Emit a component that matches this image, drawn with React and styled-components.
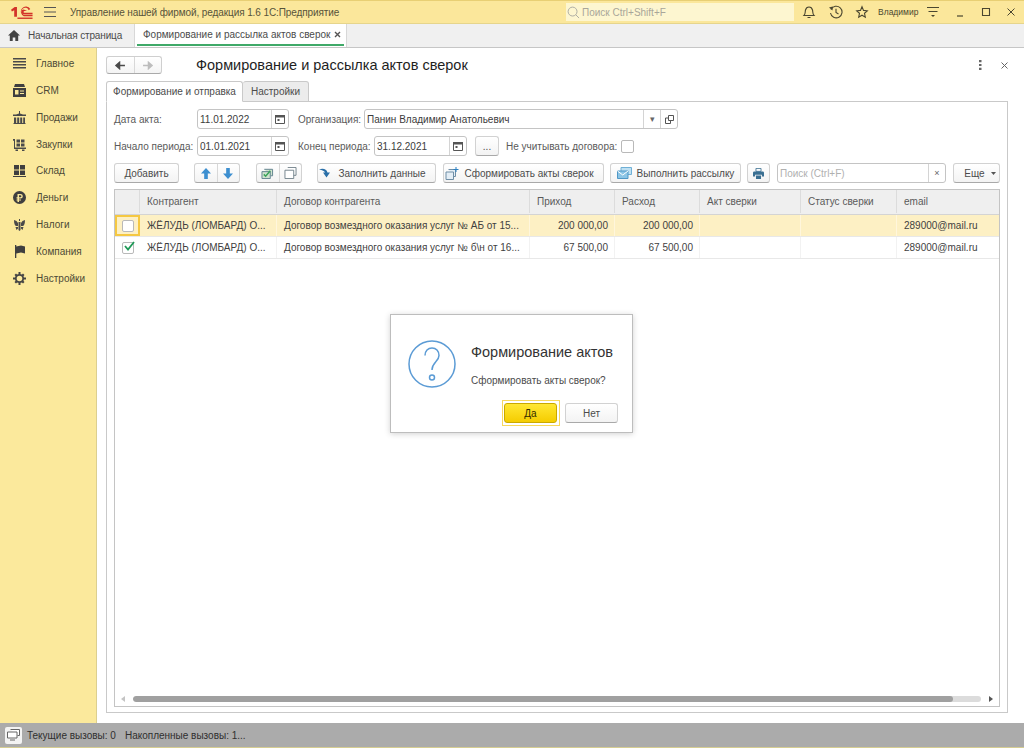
import React from "react";
import styled, { createGlobalStyle } from "styled-components";

const GlobalStyle = createGlobalStyle`
  html, body {
    margin: 0;
    padding: 0;
    background: #fff;
  }
  body {
    font-family: "Liberation Sans", Arial, sans-serif;
    font-size: 10px;
    color: #4b4b4b;
  }
`;

const columns = "25px 137px 253px 85px 85px 101px 96px 1fr";

const Window = styled.div`
  position: relative;
  width: 1024px;
  height: 748px;
  display: flex;
  flex-direction: column;
  overflow: hidden;
`;

const TitleBar = styled.div`
  flex: none;
  display: flex;
  align-items: center;
  background: #fbe79b;
  border-bottom: 1px solid #e6d58c;
  border-top: 1px solid #e8cf74;
  height: 22px;
  color: #57533a;
`;

const Logo = styled.svg`
  width: 22px;
  height: 13px;
  margin-left: 11px;
`;

const Burger = styled.svg`
  width: 12px;
  height: 10px;
  margin-left: 11px;
`;

const AppName = styled.div`
  margin-left: 14px;
  width: 496px;
  letter-spacing: -0.1px;
  white-space: nowrap;
`;

const GlobalSearch = styled.div`
  width: 228px;
  height: 18px;
  display: flex;
  align-items: center;
  gap: 2px;
  padding-left: 1px;
  box-sizing: border-box;
  background: #fdf6d0;
  color: #a9a69a;
`;

const BarIcon = styled.svg`
  width: ${p => p.$size || 14}px;
  height: ${p => p.$size || 14}px;
  margin-left: ${p => p.$ml}px;
  flex: none;
`;

const UserName = styled.div`
  margin-left: 9px;
  width: 42px;
  font-size: 8.5px;
  white-space: nowrap;
  color: #4a4630;
`;

const TabBar = styled.div`
  height: 23px;
  flex: none;
  display: flex;
  align-items: stretch;
  background: #f0f0f0;
  border-bottom: 1px solid #c6c6c6;
`;

const HomeTab = styled.div`
  width: 135px;
  display: flex;
  align-items: center;
  gap: 8px;
  padding-left: 8px;
  box-sizing: border-box;
  border-right: 1px solid #d8d8d8;
  letter-spacing: -0.15px;
  white-space: nowrap;
`;

const ActiveTab = styled.div`
  position: relative;
  width: 212px;
  display: flex;
  align-items: center;
  justify-content: space-between;
  padding: 0 5px 2px 8px;
  box-sizing: border-box;
  background: #fff;
  border-right: 1px solid #d8d8d8;
  white-space: nowrap;
  &::after {
    content: "";
    position: absolute;
    left: 2px;
    right: 2px;
    bottom: 1px;
    height: 2px;
    background: #3fa968;
  }
`;

const Body = styled.div`
  flex: 1;
  min-height: 0;
  display: flex;
`;

const Sidebar = styled.nav`
  width: 97px;
  flex: none;
  padding-top: 2px;
  box-sizing: border-box;
  background: #fbe99c;
  border-right: 1px solid #dccf8f;
`;

const NavItem = styled.div`
  height: 26.88px;
  display: flex;
  align-items: center;
  padding-left: 13px;
  gap: 10px;
  color: #4d4a36;
`;

const NavIcon = styled.svg`
  width: 13px;
  height: 13px;
  flex: none;
`;

const Main = styled.main`
  flex: 1;
  min-width: 0;
  display: flex;
  flex-direction: column;
  padding: 8px 16px 10px 9px;
  background: #fff;
`;

const Header = styled.div`
  height: 18px;
  flex: none;
  display: flex;
  align-items: center;
`;

const NavGroup = styled.div`
  width: 56px;
  height: 18px;
  display: flex;
  box-sizing: border-box;
  background: linear-gradient(#fff, #f4f4f4);
  border: 1px solid #cfcfcf;
  border-bottom-color: #aaa;
  border-radius: 3px;
`;

const NavArrow = styled.div`
  flex: 1;
  display: flex;
  align-items: center;
  justify-content: center;
  border-left: ${p => (p.$divider ? "1px solid #d8d8d8" : "none")};
`;

const PageTitle = styled.h1`
  margin: 0 0 0 34px;
  flex: 1;
  font-size: 14.5px;
  font-weight: 400;
  color: #1f1f1f;
  white-space: nowrap;
`;

const TabRow = styled.div`
  height: 21px;
  margin-top: 7px;
  flex: none;
  display: flex;
  position: relative;
  z-index: 1;
  margin-bottom: -1px;
`;

const FormTab = styled.div`
  width: ${p => p.$w}px;
  display: flex;
  align-items: center;
  justify-content: center;
  box-sizing: border-box;
  border: 1px solid #c9c9c9;
  border-bottom-color: ${p => (p.$active ? "#fff" : "#c9c9c9")};
  border-left-width: ${p => (p.$active ? 1 : 0)}px;
  border-radius: 3px 3px 0 0;
  background: ${p => (p.$active ? "#fff" : "#ececec")};
  white-space: nowrap;
`;

const Panel = styled.section`
  flex: 1;
  min-height: 0;
  display: flex;
  flex-direction: column;
  padding: 7px 7px 5px 7px;
  border: 1px solid #c9c9c9;
`;

const FormRow = styled.div`
  height: 20px;
  margin-bottom: 7px;
  flex: none;
  display: flex;
  align-items: center;
`;

const Label = styled.label`
  width: ${p => p.$w}px;
  margin-left: ${p => p.$ml || 0}px;
  flex: none;
  white-space: nowrap;
  color: #5a5a5a;
`;

const Field = styled.div`
  width: ${p => p.$w}px;
  height: 20px;
  margin-left: ${p => p.$ml || 0}px;
  display: flex;
  align-items: stretch;
  flex: none;
  box-sizing: border-box;
  background: #fff;
  border: 1px solid #c4c4c4;
  border-radius: 3px;
  color: #3c3c3c;
`;

const FieldText = styled.div`
  flex: 1;
  min-width: 0;
  display: flex;
  align-items: center;
  padding-left: 2px;
  white-space: nowrap;
  color: ${p => (p.$muted ? "#b0b0b0" : "inherit")};
`;

const FieldBtn = styled.div`
  width: ${p => p.$w || 16}px;
  flex: none;
  display: flex;
  align-items: center;
  justify-content: center;
  border-left: 1px solid #d4d4d4;
  color: #666;
  font-size: 9px;
`;

const CheckBox = styled.div`
  width: ${p => p.$size || 13}px;
  height: ${p => p.$size || 13}px;
  flex: none;
  box-sizing: border-box;
  background: #fff;
  border: 1px solid #b9b9b9;
  border-radius: 2px;
  position: relative;
`;

const CheckMark = styled.svg`
  position: absolute;
  left: 0;
  top: -3px;
  width: 13px;
  height: 12px;
`;

const Toolbar = styled.div`
  height: 20px;
  flex: none;
  display: flex;
  align-items: stretch;
`;

const Button = styled.div`
  width: ${p => p.$w}px;
  margin-left: ${p => p.$ml || 0}px;
  padding-left: ${p => p.$pl || 0}px;
  padding-right: ${p => p.$pr || 0}px;
  align-self: stretch;
  flex: none;
  display: flex;
  align-items: center;
  justify-content: center;
  gap: ${p => p.$gap || 0}px;
  box-sizing: border-box;
  background: linear-gradient(#fff, #f3f3f3);
  border: 1px solid #d2d2d2;
  border-bottom-color: #a9a9a9;
  border-radius: 3px;
  white-space: nowrap;
  color: #4b4b4b;
`;

const ButtonGroup = styled(Button)`
  justify-content: stretch;
`;

const GroupPart = styled.div`
  flex: 1;
  height: 100%;
  display: flex;
  align-items: center;
  justify-content: center;
  border-left: ${p => (p.$divider ? "1px solid #d8d8d8" : "none")};
`;

const Table = styled.div`
  flex: 1;
  min-height: 0;
  margin-top: 6px;
  display: flex;
  flex-direction: column;
  border: 1px solid #c4c4c4;
`;

const HeaderRow = styled.div`
  height: 23px;
  padding-bottom: 1px;
  flex: none;
  display: grid;
  grid-template-columns: ${columns};
  background: #efefef;
  border-bottom: 1px solid #d4d4d4;
`;

const HeaderCell = styled.div`
  display: flex;
  align-items: center;
  padding-left: 7px;
  border-right: 1px solid #dcdcdc;
  color: #5a5a5a;
  &:last-child {
    border-right: none;
  }
`;

const Row = styled.div`
  height: 21px;
  flex: none;
  display: grid;
  grid-template-columns: ${columns};
  background: ${p => (p.$selected ? "#fdf0c4" : "#fff")};
  border-bottom: 1px solid #e8e8e8;
`;

const Cell = styled.div`
  display: flex;
  align-items: center;
  justify-content: ${p => (p.$right ? "flex-end" : "flex-start")};
  padding: ${p => (p.$right ? "0 6px 0 0" : "0 0 0 7px")};
  min-width: 0;
  white-space: nowrap;
  border-right: 1px solid ${p => (p.$selected ? "#fff6dc" : "#f2f2f2")};
  color: #3f3f3f;
  &:last-child {
    border-right: none;
  }
`;

const CheckCell = styled.div`
  display: flex;
  align-items: center;
  justify-content: center;
  box-sizing: border-box;
  border: ${p => (p.$focus ? "2px solid #f5c842" : "none")};
`;

const TableFill = styled.div`
  flex: 1;
`;

const ScrollBar = styled.div`
  height: 15px;
  flex: none;
  display: flex;
  align-items: center;
  padding: 0 6px;
  gap: 8px;
`;

const ScrollTrack = styled.div`
  flex: 1;
  height: 6px;
  border-radius: 3px;
  background: #dcdcdc;
  overflow: hidden;
`;

const ScrollThumb = styled.div`
  width: 820px;
  height: 100%;
  border-radius: 3px;
  background: #a0a0a0;
`;

const ScrollArrow = styled.div`
  width: 0;
  height: 0;
  border-top: 3px solid transparent;
  border-bottom: 3px solid transparent;
  border-${p => (p.$left ? "right" : "left")}: 4px solid ${p => (p.$left ? "#c4c4c4" : "#555")};
`;

const StatusBar = styled.footer`
  height: 24px;
  flex: none;
  display: flex;
  align-items: center;
  padding-left: 5px;
  background: #ababab;
  border-bottom: 1px solid #d6cd92;
  color: #2f2f2f;
  white-space: nowrap;
`;

const StatusBtn = styled.div`
  width: 17px;
  height: 17px;
  margin-right: 5px;
  display: flex;
  align-items: center;
  justify-content: center;
  background: #f3f3f3;
  border-radius: 2px;
`;

const StatusText = styled.span`
  margin-right: 9px;
`;

const Dialog = styled.div`
  position: absolute;
  left: 390px;
  top: 314px;
  width: 243px;
  height: 119px;
  box-sizing: border-box;
  display: flex;
  padding: 25px 14px 0 17px;
  background: #fff;
  border: 1px solid #bdbdbd;
  box-shadow: 0 1px 6px rgba(0, 0, 0, 0.18);
`;

const DialogIcon = styled.svg`
  width: 48px;
  height: 48px;
  flex: none;
`;

const DialogBody = styled.div`
  margin-left: 15px;
  flex: 1;
  display: flex;
  flex-direction: column;
`;

const DialogTitle = styled.div`
  margin-top: 4px;
  font-size: 14.5px;
  line-height: 17px;
  color: #333;
`;

const DialogText = styled.div`
  margin-top: 13px;
  line-height: 13px;
  white-space: nowrap;
  color: #4b4b4b;
`;

const DialogActions = styled.div`
  margin-top: 16px;
  display: flex;
  justify-content: flex-end;
  gap: 8px;
`;

const DefaultButton = styled(Button)`
  position: relative;
  height: 20px;
  background: linear-gradient(#ffe733, #f5cc00);
  border-color: #c9a800;
  color: #332c00;
  &::before {
    content: "";
    position: absolute;
    inset: -4px -4px -4px -3px;
    border: 1px solid #f7d85e;
  }
`;

const PlainButton = styled(Button)`
  height: 20px;
`;

const stroke = { fill: "none", stroke: "currentColor", strokeWidth: 1.1 };

const Arrow = ({ color, flip }) => (
  <svg width="12" height="9" viewBox="0 0 13 10">
    <path
      d={flip ? "M1 5h7M7 1.500 11 5 7 8.500z" : "M12 5H5M6 1.500 2 5l4 3.500z"}
      fill={color}
      stroke={color}
      strokeWidth="1.600"
    />
  </svg>
);

const UpDown = ({ down }) => (
  <svg width="10" height="11" viewBox="0 0 11 12">
    <path
      d={down ? "M3.500 0h4v6H11L5.500 12 0 6h3.500z" : "M3.500 12h4V6H11L5.500 0 0 6h3.500z"}
      fill="#3d8fd0"
    />
  </svg>
);

const Calendar = () => (
  <svg width="10" height="10" viewBox="0 0 10 10">
    <path d="M.5 1.500h9v8h-9z" fill="none" stroke="#555" />
    <path d="M0 1h10v2.500H0zM2.500 5h2v2h-2z" fill="#555" />
  </svg>
);

const navIcons = {
  main: <path d="M0 1h13v1.400H0zM0 4h13v1.400H0zM0 7h13v1.400H0zM0 10h13v1.400H0z" fill="#4a4a4a" />,
  crm: (
    <path
      fillRule="evenodd"
      d="M2 0h9l1 3H1zM0 4h13v9H0zM2 6v4.500h3.500V6zM7 6.500v1h4v-1zM7 9v1h4V9z"
      fill="#3f3f3f"
    />
  ),
  sales: (
    <path
      d="M6 0h1v2.500l3 1H13v1.500H0V3.500h3l3-1zM1 6.500h2.200V12H1zM4.200 6.500h2V12h-2zM7.200 6.500h2V12h-2zM10.200 6.500H12V12h-1.800zM.5 12h12v1H.5z"
      fill="#4a4a4a"
    />
  ),
  buy: (
    <path
      d="M0 1h2v8.500h11V11H1V2.800H0zM3.500 1.500H7v3H3.500zM8 1.500h3.500v3H8zM3.500 5.500H7v3H3.500zM8 5.500h3.500v3H8zM2.500 11.500H5V13H2.500zM9 11.500h2.500V13H9z"
      fill="#4a4a4a"
    />
  ),
  stock: (
    <path d="M1 1h5v4.500H1zM7 1h5v4.500H7zM1 6.500h5V11H1zM7 6.500h5V11H7zM0 12h13v1H0z" fill="#3f3f3f" />
  ),
  money: (
    <path
      fillRule="evenodd"
      d="M6.500 0a6.500 6.500 0 1 0 0 13 6.500 6.500 0 0 0 0-13zM4.500 3h3a2.300 2.300 0 0 1 0 4.600H6v.9h2v1.100H6V11H4.500V9.600h-1V8.500h1v-.9h-1V6.300h1zM6 4.300v2h1.400a1 1 0 0 0 0-2z"
      fill="#3f3f3f"
    />
  ),
  tax: (
    <path
      d="M6 1h1v2H6zM1 2l2.500 1L5 5v3H3.500C2 8 1 6 1 2zM12 2l-2.500 1L8 5v3h1.500C11 8 12 6 12 2zM5.500 4h2v8l-1 1-1-1zM2.500 9H5v1.500L3.500 12zM10.500 9H8v1.500L9.500 12z"
      fill="#4a4a4a"
    />
  ),
  company: <path d="M2 0h1.300v13H2zM3.300 1.500 8 .5l4 1v7l-4-1-4.700 1z" fill="#3f3f3f" />,
  settings: (
    <g>
      <circle cx="6.500" cy="6.500" r="3.700" fill="none" stroke="#444" strokeWidth="1.800" />
      <path
        d="M5.500 0h2v2.500h-2zM5.500 10.500h2V13h-2zM0 5.500h2.500v2H0zM10.500 5.500H13v2h-2.500zM1.500 3 3 1.500 4.500 3 3 4.500zM8.500 3 10 1.500 11.500 3 10 4.500zM1.500 10 3 8.500 4.500 10 3 11.500zM8.500 10 10 8.500 11.500 10 10 11.500z"
        fill="#444"
      />
    </g>
  ),
};

const navItems = [
  ["main", "Главное"],
  ["crm", "CRM"],
  ["sales", "Продажи"],
  ["buy", "Закупки"],
  ["stock", "Склад"],
  ["money", "Деньги"],
  ["tax", "Налоги"],
  ["company", "Компания"],
  ["settings", "Настройки"],
];

const headers = ["", "Контрагент", "Договор контрагента", "Приход", "Расход", "Акт сверки", "Статус сверки", "email"];

const rows = [
  { checked: false, selected: true, contract: "Договор возмездного оказания услуг № АБ от 15...", sum: "200 000,00" },
  { checked: true, selected: false, contract: "Договор возмездного оказания услуг № б\\н от 16...", sum: "67 500,00" },
];

const App = () => {
  return (
    <Window>
      <GlobalStyle />
      <TitleBar>
        <Logo viewBox="0 0 24 14">
          <path d="M0 4 4 1h2.500v10.500H3.500V4.500L1 6z" fill="#d2332a" />
          <path d="M21 3.200A5.500 5.500 0 1 0 14 11h9.500V9.500H14a4 4 0 1 1 5.300-5z" fill="#d2332a" />
          <path d="M14 3.800a2.600 2.600 0 1 0 0 5.200h9.500V7.400H14.500a1 1 0 1 1 .5-2h2.500z" fill="#d2332a" />
          <path d="M7 12.500h16.500V14H7z" fill="#d2332a" />
        </Logo>
        <Burger viewBox="0 0 12 10">
          <path d="M0 .5h12M0 5h12M0 9.500h12" stroke="#555" strokeWidth="1" />
        </Burger>
        <AppName>Управление нашей фирмой, редакция 1.6 1С:Предприятие</AppName>
        <GlobalSearch>
          <svg width="13" height="13" viewBox="0 0 14 14">
            <circle cx="6" cy="6" r="4.800" fill="none" stroke="#a8a8a0" />
            <path d="m9.500 9.500 3.500 3.500" stroke="#a8a8a0" />
          </svg>
          Поиск Ctrl+Shift+F
        </GlobalSearch>
        <BarIcon $ml={8} viewBox="0 0 14 14">
          <path d="M2 10.500c1.500-1.500 1-3.500 1.500-5.500S5.500 2 7 2s3 1 3.500 3 0 4 1.500 5.500zM5.500 12.500h3" {...stroke} color="#4a4630" />
        </BarIcon>
        <BarIcon $ml={13} viewBox="0 0 14 14">
          <path d="M2 4.500A5.800 5.800 0 1 1 1.500 8M7 3.800V7.500l2.500 1.500" {...stroke} color="#4a4630" />
          <path d="M0 2.500 3.800 1.500 3.500 5.500z" fill="#4a4630" />
        </BarIcon>
        <BarIcon $ml={12} viewBox="0 0 14 14">
          <path d="M7 1.800 8.500 5.400 12.300 5.800 9.500 8.300 10.300 12.200 7 10.200 3.700 12.200 4.500 8.300 1.700 5.800 5.500 5.400z" {...stroke} color="#4a4630" />
        </BarIcon>
        <UserName>Владимир</UserName>
        <BarIcon $ml={6} $size={14} viewBox="0 0 14 14">
          <path d="M1 2.500h12M2.500 6.500h9" stroke="#4a4630" />
          <path d="M5 10h4l-2 2z" fill="#4a4630" />
        </BarIcon>
        <BarIcon $ml={14} $size={12} viewBox="0 0 12 12">
          <path d="M3 10h6" stroke="#4a4630" strokeWidth="1.200" />
        </BarIcon>
        <BarIcon $ml={14} $size={12} viewBox="0 0 12 12">
          <path d="M2.500 2.500h7v7h-7z" {...stroke} color="#4a4630" />
        </BarIcon>
        <BarIcon $ml={13} $size={12} viewBox="0 0 12 12">
          <path d="m2.500 2.500 7 7M9.500 2.500l-7 7" stroke="#4a4630" />
        </BarIcon>
      </TitleBar>

      <TabBar>
        <HomeTab>
          <svg width="12" height="11" viewBox="0 0 12 11">
            <path d="M6 0 12 5.500h-1.800V11H7.300V7.500H4.700V11H1.800V5.500H0z" fill="#444" />
          </svg>
          Начальная страница
        </HomeTab>
        <ActiveTab>
          Формирование и рассылка актов сверок
          <svg width="7" height="7" viewBox="0 0 7 7">
            <path d="m1 1 5 5M6 1 1 6" stroke="#555" strokeWidth="1.400" />
          </svg>
        </ActiveTab>
      </TabBar>

      <Body>
        <Sidebar>
          {navItems.map(([key, label]) => (
            <NavItem key={key}>
              <NavIcon viewBox="0 0 13 13">{navIcons[key]}</NavIcon>
              {label}
            </NavItem>
          ))}
        </Sidebar>

        <Main>
          <Header>
            <NavGroup>
              <NavArrow><Arrow color="#4a4a4a" /></NavArrow>
              <NavArrow $divider><Arrow color="#bdbdbd" flip /></NavArrow>
            </NavGroup>
            <PageTitle>Формирование и рассылка актов сверок</PageTitle>
            <svg width="3" height="10" viewBox="0 0 3 10">
              <path d="M0 0h2.500v2.200H0zM0 3.900h2.500v2.200H0zM0 7.800h2.500V10H0z" fill="#666" />
            </svg>
            <BarIcon $ml={19} $size={7} viewBox="0 0 7 7">
              <path d="m.5.500 6 6M6.500.500l-6 6" stroke="#666" />
            </BarIcon>
          </Header>

          <TabRow>
            <FormTab $active $w={137}>Формирование и отправка</FormTab>
            <FormTab $w={66}>Настройки</FormTab>
          </TabRow>

          <Panel>
            <FormRow>
              <Label $w={83}>Дата акта:</Label>
              <Field $w={92}>
                <FieldText>11.01.2022</FieldText>
                <FieldBtn><Calendar /></FieldBtn>
              </Field>
              <Label $ml={9} $w={66}>Организация:</Label>
              <Field $w={314}>
                <FieldText>Панин Владимир Анатольевич</FieldText>
                <FieldBtn>▾</FieldBtn>
                <FieldBtn>
                  <svg width="9" height="9" viewBox="0 0 9 9">
                    <path d="M3.500.500h5v5h-5zM3 3H.500v5.500h5V6" fill="none" stroke="#555" />
                  </svg>
                </FieldBtn>
              </Field>
            </FormRow>
            <FormRow>
              <Label $w={83}>Начало периода:</Label>
              <Field $w={92}>
                <FieldText>01.01.2021</FieldText>
                <FieldBtn><Calendar /></FieldBtn>
              </Field>
              <Label $ml={9} $w={76}>Конец периода:</Label>
              <Field $w={93}>
                <FieldText>31.12.2021</FieldText>
                <FieldBtn><Calendar /></FieldBtn>
              </Field>
              <Button $w={24} $ml={8}>...</Button>
              <Label $ml={7} $w={115}>Не учитывать договора:</Label>
              <CheckBox />
            </FormRow>

            <Toolbar>
              <Button $w={65}>Добавить</Button>
              <ButtonGroup $w={46} $ml={15}>
                <GroupPart><UpDown /></GroupPart>
                <GroupPart $divider><UpDown down /></GroupPart>
              </ButtonGroup>
              <ButtonGroup $w={46} $ml={16}>
                <GroupPart>
                  <svg width="13" height="12" viewBox="0 0 14 13">
                    <path d="M3.500 2.500h9v7h-2M1 5h9v7.500H1z" fill="#cfe3cf" stroke="#5c7f8c" />
                    <path d="m3 8 2 2 5-6" fill="none" stroke="#3aa35a" strokeWidth="1.600" />
                  </svg>
                </GroupPart>
                <GroupPart $divider>
                  <svg width="13" height="12" viewBox="0 0 14 13">
                    <path d="M4 .500h9v8.500h-2.500M1 3.500h9.500v9H1z" fill="#fff" stroke="#6f7f88" />
                  </svg>
                </GroupPart>
              </ButtonGroup>
              <Button $w={119} $ml={15} $gap={7} $pr={8}>
                <svg width="12" height="10" viewBox="0 0 12 10">
                  <path d="M0 1.500C4 0 7.500 1 8.500 4.500H11L7.500 9.500 4 4.500h2C5.500 3 3.500 2 0 1.500z" fill="#2a6fa8" />
                </svg>
                Заполнить данные
              </Button>
              <Button $w={161} $ml={7} $gap={5} $pr={8}>
                <svg width="14" height="13" viewBox="0 0 14 13">
                  <path d="M3.500 2.500h7v7h-2M1 5h7.500v7.500H1z" fill="#e4eef6" stroke="#6f8ea6" />
                  <path d="M11 0v5M8.500 2.500h5" stroke="#2a7fc0" />
                </svg>
                Сформировать акты сверок
              </Button>
              <Button $w={131} $ml={6} $gap={5}>
                <svg width="15" height="12" viewBox="0 0 15 12">
                  <path d="M4 .500h10.500v7H4z" fill="#bfe0f2" stroke="#6fb0d6" />
                  <path d="M.5 4h10.500v7.500H.5z" fill="#8cc5e6" stroke="#4f97c6" />
                  <path d="m.5 4 5.250 4L11 4" fill="none" stroke="#fff" />
                </svg>
                Выполнить рассылку
              </Button>
              <Button $w={23} $ml={6}>
                <svg width="11" height="11" viewBox="0 0 13 13">
                  <path d="M3.500.5h6v3.500h-6z" fill="none" stroke="#3a6f92" />
                  <path d="M1.500 4h10A1.500 1.500 0 0 1 13 5.500V10h-2.500V8h-8v2H0V5.500A1.500 1.500 0 0 1 1.500 4zM3.500 9h6v4h-6z" fill="#3a6f92" />
                </svg>
              </Button>
              <Field $w={169} $ml={7}>
                <FieldText $muted>Поиск (Ctrl+F)</FieldText>
                <FieldBtn $w={16}>×</FieldBtn>
              </Field>
              <Button $w={47} $ml={7} $gap={6} $pl={7}>
                Еще <svg width="5" height="3" viewBox="0 0 5 3"><path d="M0 0h5L2.500 3z" fill="#555" /></svg>
              </Button>
            </Toolbar>

            <Table>
              <HeaderRow>
                {headers.map((text, i) => (
                  <HeaderCell key={i}>{text}</HeaderCell>
                ))}
              </HeaderRow>
              {rows.map((row, i) => (
                <Row key={i} $selected={row.selected}>
                  <CheckCell $focus={row.selected}>
                    <CheckBox $size={12}>
                      {row.checked && (
                        <CheckMark viewBox="0 0 13 12">
                          <path d="m2 6 3 3.500L11 2" fill="none" stroke="#1f9a58" strokeWidth="1.800" />
                        </CheckMark>
                      )}
                    </CheckBox>
                  </CheckCell>
                  <Cell $selected={row.selected}>ЖЁЛУДЬ (ЛОМБАРД) О...</Cell>
                  <Cell $selected={row.selected}>{row.contract}</Cell>
                  <Cell $selected={row.selected} $right>{row.sum}</Cell>
                  <Cell $selected={row.selected} $right>{row.sum}</Cell>
                  <Cell $selected={row.selected} />
                  <Cell $selected={row.selected} />
                  <Cell $selected={row.selected}>289000@mail.ru</Cell>
                </Row>
              ))}
              <TableFill />
              <ScrollBar>
                <ScrollArrow $left />
                <ScrollTrack><ScrollThumb /></ScrollTrack>
                <ScrollArrow />
              </ScrollBar>
            </Table>
          </Panel>
        </Main>
      </Body>

      <StatusBar>
        <StatusBtn>
          <svg width="13" height="12" viewBox="0 0 13 12">
            <path d="M3.500.500h9v6h-2M.5 3h9.500v6H.5zM3 11h5" fill="#fff" stroke="#666" />
          </svg>
        </StatusBtn>
        <StatusText>Текущие вызовы: 0</StatusText>
        <span>Накопленные вызовы: 1...</span>
      </StatusBar>

      <Dialog>
        <DialogIcon viewBox="0 0 48 48">
          <circle cx="24" cy="24" r="23" fill="none" stroke="#5b9bd5" strokeWidth="1.500" />
          <path d="M17 15.500C17 11 20 8 24 8s7 3 7 7.500c0 6-7 7-7 14.500" fill="none" stroke="#5b9bd5" strokeWidth="1.500" />
          <circle cx="24" cy="37.500" r="2.500" fill="none" stroke="#5b9bd5" strokeWidth="1.500" />
        </DialogIcon>
        <DialogBody>
          <DialogTitle>Формирование актов</DialogTitle>
          <DialogText>Сформировать акты сверок?</DialogText>
          <DialogActions>
            <DefaultButton $w={53}>Да</DefaultButton>
            <PlainButton $w={53}>Нет</PlainButton>
          </DialogActions>
        </DialogBody>
      </Dialog>
    </Window>
  );
};

export default App;
